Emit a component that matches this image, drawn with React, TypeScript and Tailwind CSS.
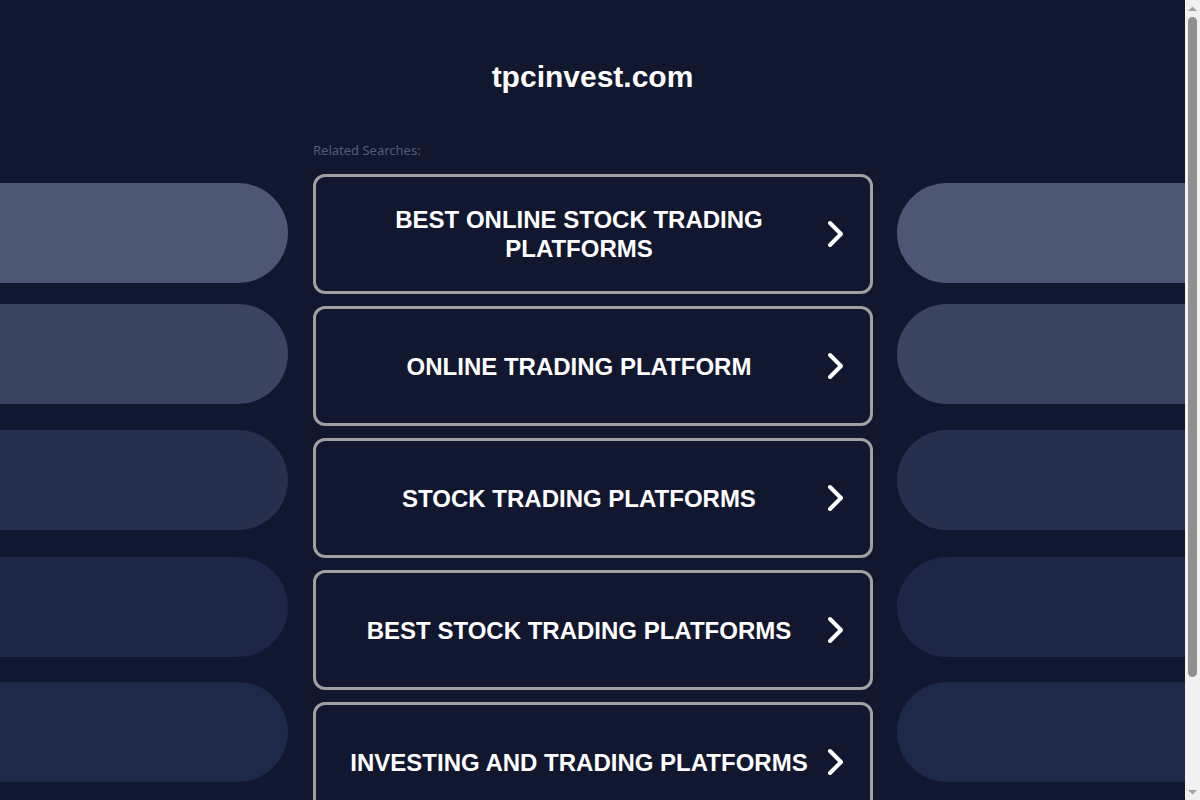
import React from "react";

const items = [
  "BEST ONLINE STOCK TRADING PLATFORMS",
  "ONLINE TRADING PLATFORM",
  "STOCK TRADING PLATFORMS",
  "BEST STOCK TRADING PLATFORMS",
  "INVESTING AND TRADING PLATFORMS",
];

const pills = [
  { c: "bg-[#4d5773]", m: "mt-0" },
  { c: "bg-[#3a4360]", m: "mt-[21px]" },
  { c: "bg-[#272f4f]", m: "mt-[26px]" },
  { c: "bg-[#1d2646]", m: "mt-[27px]" },
  { c: "bg-[#1e2849]", m: "mt-[25px]" },
];

function Chevron() {
  return (
    <svg width="18" height="28" viewBox="0 0 18 28" className="shrink-0">
      <path d="M3 3 L14 14 L3 25" fill="none" stroke="white" strokeWidth="4" strokeLinecap="round" strokeLinejoin="round" />
    </svg>
  );
}

function PillColumn({ side }: { side: "left" | "right" }) {
  return (
    <div className="flex flex-col pt-[41px]">
      {pills.map((p, i) => (
        <div
          key={i}
          className={`h-[100px] ${p.c} ${p.m} ${side === "left" ? "rounded-r-full" : "rounded-l-full"}`}
        />
      ))}
    </div>
  );
}

function Scrollbar() {
  return (
    <div className="w-[15px] h-[800px] shrink-0 bg-[#f1f1f1] flex flex-col items-center">
      <div className="h-[17px] flex items-center justify-center">
        <svg width="9" height="6" viewBox="0 0 9 6">
          <path d="M0 5 L4.5 0.5 L9 5 Z" fill="#a3a3a3" />
        </svg>
      </div>
      <div className="w-[9px] h-[660px] rounded-full bg-[#909090]" />
      <div className="flex-1" />
      <div className="h-[17px] flex items-center justify-center">
        <svg width="9" height="6" viewBox="0 0 9 6">
          <path d="M0 1 L4.5 5.5 L9 1 Z" fill="#a3a3a3" />
        </svg>
      </div>
    </div>
  );
}

export default function App() {
  return (
    <div className="h-[800px] w-[1200px] flex overflow-hidden bg-[#11172e]">
      <div className="flex-1 flex flex-col">
        <div className="flex justify-center pt-[57px]">
          <h1 className="text-[30px] leading-[40px] font-bold text-white font-['Liberation_Sans',Arial,sans-serif]">
            tpcinvest.com
          </h1>
        </div>
        <div className="mt-[45px] grid grid-cols-[288px_560px_1fr] gap-x-[25px]">
          <PillColumn side="left" />
          <div>
            <div className="text-[13px] leading-[16px] text-[#525d7c] font-['Noto_Sans',sans-serif]">
              Related Searches:
            </div>
            <div className="mt-[16px] flex flex-col gap-[12px]">
              {items.map((t) => (
                <div
                  key={t}
                  className="h-[120px] rounded-[12px] border-[3px] border-[#a0a0a0] flex items-center px-[25px]"
                >
                  <div className="flex-1 text-center text-white font-bold text-[24px] leading-[29px] font-['Liberation_Sans',Arial,sans-serif] px-[2px]">
                    {t}
                  </div>
                  <div className="ml-[10px]">
                    <Chevron />
                  </div>
                </div>
              ))}
            </div>
          </div>
          <div className="-ml-[1px]">
            <PillColumn side="right" />
          </div>
        </div>
      </div>
      <Scrollbar />
    </div>
  );
}
